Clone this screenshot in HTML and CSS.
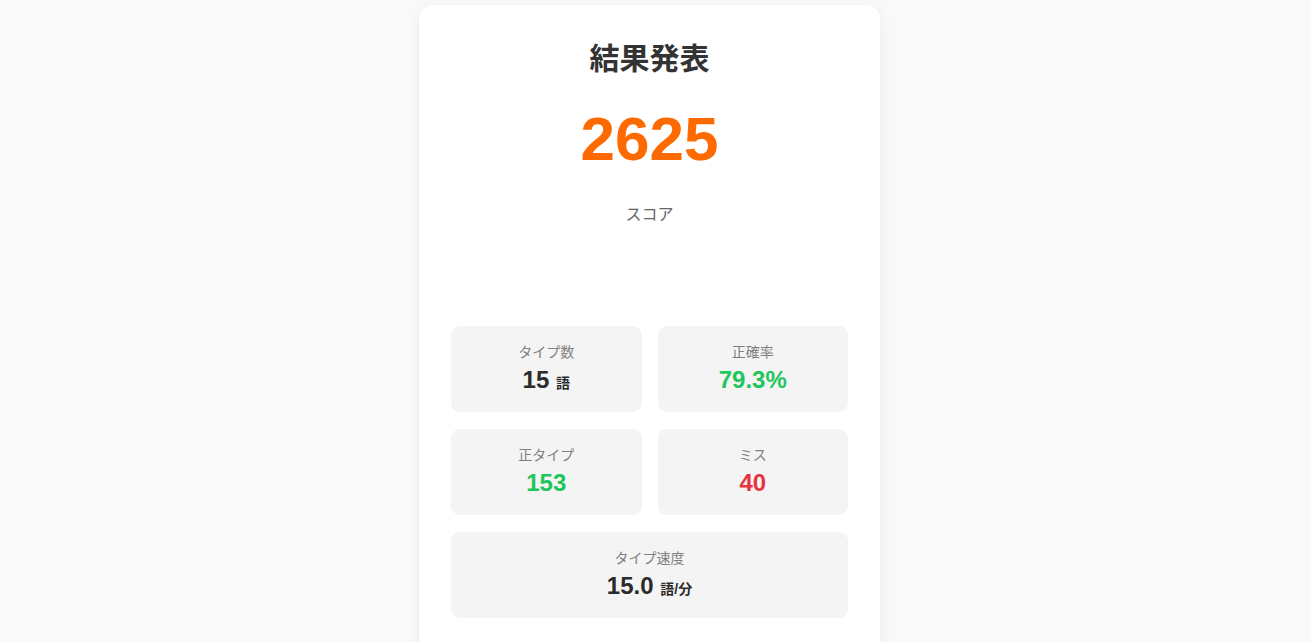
FILE: index.html
```html
<!DOCTYPE html>
<html lang="ja">
<head>
<meta charset="utf-8">
<title>結果発表</title>
<link rel="stylesheet" href="styles.css">
</head>
<body>
<div class="page">
  <main class="card">
    <h1 class="title">結果発表</h1>
    <div class="score">2625</div>
    <div class="score-label">スコア</div>
    <div class="stats">
      <div class="stat">
        <div class="stat-label">タイプ数</div>
        <div class="stat-value">15 <span class="unit">語</span></div>
      </div>
      <div class="stat">
        <div class="stat-label">正確率</div>
        <div class="stat-value green">79.3%</div>
      </div>
      <div class="stat">
        <div class="stat-label">正タイプ</div>
        <div class="stat-value green">153</div>
      </div>
      <div class="stat">
        <div class="stat-label">ミス</div>
        <div class="stat-value red">40</div>
      </div>
      <div class="stat wide">
        <div class="stat-label">タイプ速度</div>
        <div class="stat-value">15.0 <span class="unit">語/分</span></div>
      </div>
    </div>
  </main>
</div>
</body>
</html>
```
FILE: styles.css
```css
* { box-sizing: border-box; }
html, body {
  margin: 0;
  padding: 0;
  background: #f9f9f9;
  height: 100%;
  overflow: hidden;
}
body {
  font-family: "Liberation Sans", Arial, "Noto Sans CJK JP", sans-serif;
  color: #333;
}
.page {
  display: flex;
  justify-content: center;
  padding: 5px 11px 0 0;
}
.card {
  width: 461px;
  background: #fff;
  border-radius: 14px;
  box-shadow: 0 2px 14px rgba(0, 0, 0, 0.06);
  padding: 32px 32px 24px;
  text-align: center;
  height: 660px;
}
.title {
  margin: 0;
  font-family: "Noto Sans CJK JP", sans-serif;
  font-size: 30px;
  font-weight: 700;
  line-height: 38px;
  color: #333;
}
.score {
  margin-top: 26px;
  font-size: 62px;
  font-weight: 700;
  line-height: 75px;
  color: #ff6a00;
}
.score-label {
  margin-top: 25px;
  font-family: "Noto Sans CJK JP", sans-serif;
  font-size: 16px;
  line-height: 24px;
  color: #666;
}
.stats {
  margin-top: 101px;
  display: grid;
  grid-template-columns: 1fr 1fr;
  column-gap: 16px;
  row-gap: 17px;
}
.stat {
  background: #f4f4f4;
  border-radius: 9px;
  padding: 15px 8px;
  height: 86px;
}
.stat.wide { grid-column: 1 / span 2; }
.stat-label {
  font-family: "Noto Sans CJK JP", sans-serif;
  font-size: 14px;
  line-height: 21px;
  color: #808080;
}
.stat-value {
  margin-top: 3px;
  font-size: 24px;
  font-weight: 700;
  line-height: 29px;
  color: #2b2b2b;
}
.unit {
  font-family: "Liberation Sans", "Noto Sans CJK JP", sans-serif;
  font-size: 14px;
  font-weight: 700;
}
.green { color: #1fc65b; }
.red { color: #e8323f; }
```
